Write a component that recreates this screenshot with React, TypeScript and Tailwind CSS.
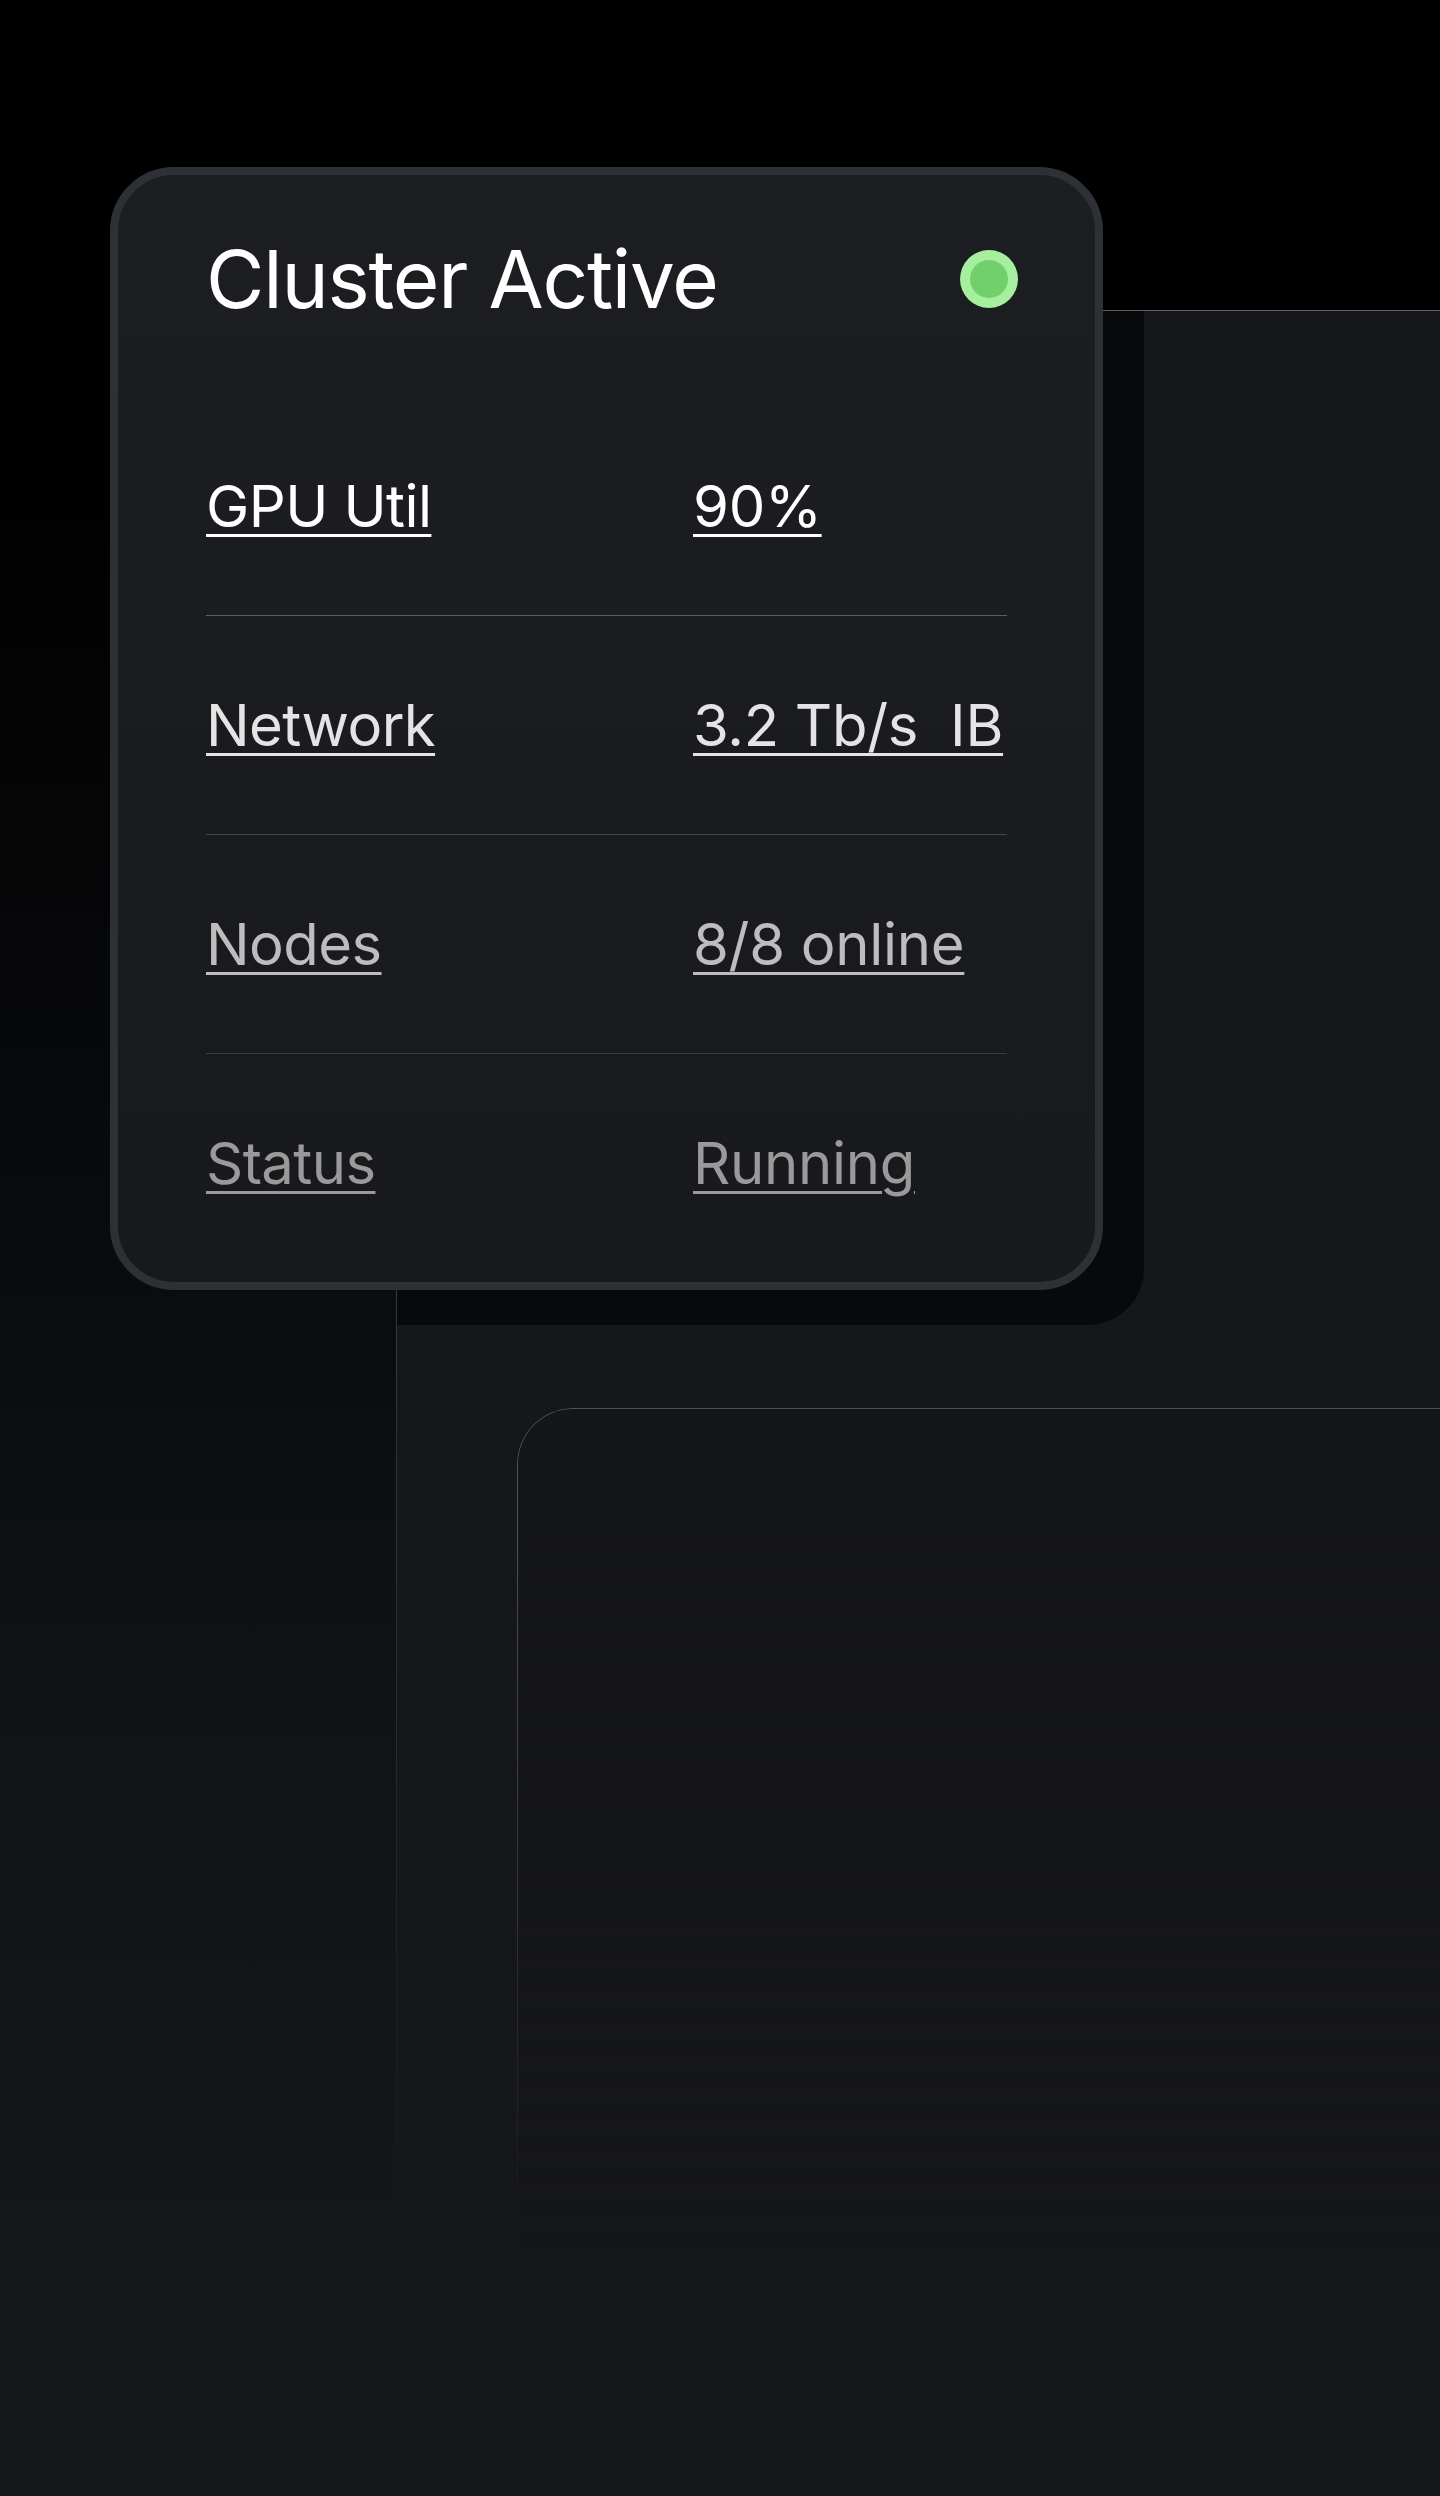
const rows = [
  { label: 'GPU Util', value: '90%', text: 'text-white', line: 'border-b border-[#5c5e62]' },
  { label: 'Network', value: '3.2 Tb/s\u00A0 IB', text: 'text-[#e4e4e4]', line: 'border-b border-[#45474b]' },
  { label: 'Nodes', value: '8/8 online', text: 'text-[#bdbdbd]', line: 'border-b border-[#3a3c40]' },
  { label: 'Status', value: 'Running', text: 'text-[#9a9a9a]', line: '' },
];

function ClusterCard() {
  return (
    <div className="relative z-10 ml-[110px] mt-[167px] w-[993px] rounded-[64px] border-[8px] border-[#2d3136] bg-gradient-to-b from-[#1d1e21] to-[#18191c] pb-[10px]">
      {/* Header */}
      <div className="flex items-center justify-between pl-[88px] pr-[77px] pt-[64px]">
        <h2 className="text-[80px] leading-none font-normal tracking-[-0.015em] text-white">Cluster Active</h2>
        <span className="flex h-[58px] w-[58px] items-center justify-center rounded-full bg-[#a6ef9e]">
          <span className="h-[38px] w-[38px] rounded-full bg-[#72d06c]" />
        </span>
      </div>

      {/* Stats */}
      <div className="mt-[78px] px-[88px]">
        {rows.map((row) => (
          <div key={row.label} className={`grid grid-cols-[487px_1fr] py-[80px] ${row.line}`}>
            <span className={`text-[58px] leading-none tracking-[-0.01em] underline decoration-[3px] underline-offset-[7px] ${row.text}`}>
              <span>{row.label}</span>
            </span>
            <span className={`text-[58px] leading-none tracking-[-0.005em] underline decoration-[3px] underline-offset-[7px] ${row.text}`}>
              <span>{row.value}</span>
            </span>
          </div>
        ))}
      </div>
    </div>
  );
}

function Backdrop() {
  return (
    <div className="relative -mt-[980px] ml-[396px] h-[2186px] overflow-hidden border-t border-[#5e6166] bg-[#16171a]">
      {/* hard drop shadow of the card, only seen on this panel */}
      <div className="absolute -left-[245px] -top-[109px] h-[1123px] w-[993px] rounded-[56px] bg-black/60" />
      <div className="flex h-full">
        {/* fading left edge */}
        <div className="relative w-px shrink-0 bg-[linear-gradient(to_bottom,#44474c_0%,#34363a_50%,transparent_88%)]" />
        <div className="relative flex-1 pl-[120px] pt-[1097px]">
          <div className="h-[1088px] rounded-tl-[56px] border-l border-t border-[#4d5055] bg-[#151619] [mask-image:linear-gradient(to_bottom,black_0px,black_120px,transparent_840px)]" />
        </div>
      </div>
    </div>
  );
}

export default function App() {
  return (
    <div className="min-h-[2496px] w-full overflow-hidden bg-[linear-gradient(180deg,#000000_0px,#000000_420px,#0a0b0d_1250px,#121316_1750px,#16171a_2300px)] font-['Inter','Liberation_Sans',sans-serif]">
      <ClusterCard />
      <Backdrop />
    </div>
  );
}
